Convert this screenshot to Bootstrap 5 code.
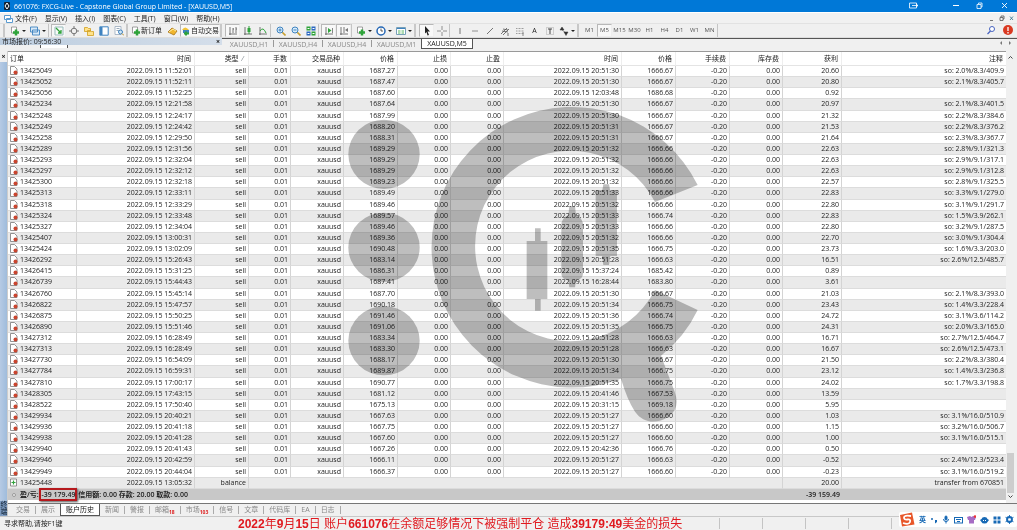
<!DOCTYPE html>
<html lang="zh-CN">
<head>
<meta charset="utf-8">
<meta name="viewport" content="width=device-width, initial-scale=1">
<title>661076: FXCG-Live - Capstone Global Group Limited</title>
<link href="https://cdn.jsdelivr.net/npm/bootstrap@5.3.0/dist/css/bootstrap.min.css" rel="stylesheet">
<style>
body{font-family:"Open Sans","Noto Sans CJK SC",sans-serif;font-size:7px;line-height:11px;background:#f0f0f0;color:#222}
button{font:inherit;color:inherit;background:none;border:0;padding:0}
svg{display:block;flex:none}
.title-bar{background:#0078d7;color:#fff;height:12px}
.menu-strip{height:11px;background:#f1f1f1;border-top:1px solid #fff}
.menu-strip a{color:#222;text-decoration:none}
.menus{gap:8px;margin-left:2px}
.tools{height:15px;padding:0 2px 0 3px;border-bottom:1px solid #ddd;border-top:1px solid #e2e2e2}
.tool{width:15px;height:13px;display:flex;align-items:center;justify-content:center;flex:none}
.tool.drop{width:20px;gap:2px}
.tool.drop::after{content:"";border:2px solid transparent;border-top-color:#222;border-bottom:0}
.tool.on,.auto{background:#f8f8f8;border:1px solid #b8b8b8;border-right-color:#eee;border-bottom-color:#eee}
.rule{width:3px;height:13px;border-left:1px solid #c4c4c4;flex:none}
.grip{width:5px;height:13px;border-left:2px solid #c8c8c8;flex:none}
.frames{font-size:6px;color:#555}
.order{width:34px;height:13px}
.auto{width:40px;height:13px}
.market{width:222px;height:11px;flex:none}
.market-head{height:7px;line-height:7px;background:linear-gradient(90deg,#bccddf,#d4deea);padding:0 2px}
.stub{width:28px;height:3px;margin-left:40px;border:solid #555;border-width:0 1px;background:#fff}
.charts{height:11px;border-top:1px solid #555;padding-left:3px}
.charts button{width:49px;color:#8a8a8a;line-height:9px;border-right:1px solid #999;height:7px;margin-top:1px}
.charts button:nth-child(4){border:0}
.charts button.on{width:52px;height:10px;margin-top:0;background:#fff;color:#222;border:1px solid #555;border-top:0}
.work{min-height:0;margin-top:2px}
.side{width:8px;border-right:1px solid #ccc}
.side-fill{background:linear-gradient(90deg,#b6cae4,#9fbcdc)}
.side-name{writing-mode:vertical-rl;height:15px;line-height:7px;background:#7e9cc2;font-size:7px;color:#123}
.deals{border-top:1px solid #999;background:#fff;border-bottom:3px solid #fff;min-width:0}
.deals table{width:100%;height:100%;table-layout:fixed;border-collapse:separate;border-spacing:0}
.deals td,.deals th{padding:0 2px;text-align:right;white-space:nowrap;border-right:1px solid #d4d4d4;font-weight:400;line-height:10px}
.deals td:last-child,.deals th:last-child{border-right:0}
.deals td:first-child,.deals th:first-child{text-align:left}
.deals thead tr{height:14px}
.deals th{border-right-color:#eee;padding-right:3px;border-bottom:1px solid #e4e4e4}
.deals tbody td{border-bottom:1px solid #dcdcdc}
.deals tbody tr:nth-child(even){background:#eaeaea}
.deals tfoot tr{height:11px;background:#c8c8c8}
.deals tfoot td{border:0;font-weight:600}
.deals td svg{display:inline-block;vertical-align:-2px;margin-right:2px}
.boxed{display:inline-block;border:2px solid #b5191d;box-shadow:1px 1px 2px #555;position:relative;line-height:9px;margin:-1px}
.brand{position:absolute;left:34%;top:51px;width:354px;height:323px;mix-blend-mode:multiply;pointer-events:none}
.scroller{width:8px;background:#f0f0f0;flex:none;padding:3px 0;margin-right:3px}
.thumb{background:#cdcdcd;height:40px;width:7px}
.pages{height:13px;border-top:1px solid #777;padding-left:3px}
.pages button{color:#888;padding:0 5px;height:8px;line-height:8px;border-right:1px solid #aaa;margin-top:2px;white-space:nowrap}
.pages button.on{background:#fff;color:#111;height:12px;border:1px solid #555;border-top:0;margin:0}
.pages button.pre{border:0}
.pages small{color:#d22;font-size:5px;vertical-align:-2px;font-weight:700}
.status{height:14px;border-top:1px solid #c8c8c8}
.status i{width:43px;border-left:1px solid #c4c4c4;height:11px}
.seps{margin-right:83px}
.notice{position:absolute;left:238px;bottom:-1px;font:12px/14px "Liberation Sans","Noto Sans CJK SC",sans-serif;color:#e0191f;white-space:nowrap}
.ime{position:absolute;right:0;bottom:3px;width:118px;height:15px;background:#fff;border-radius:2px;color:#1769b5;padding-right:3px}
</style>
</head>
<body>
<div class="vh-100 d-flex flex-column position-relative">
<header class="title-bar d-flex align-items-center flex-shrink-0">
  <svg class="ms-1 me-1" width="6" height="8" viewBox="0 0 6 8"><rect width="6" height="8" rx="1" fill="#123"/><path d="M3 1 1 4l2 3 2-3z" fill="none" stroke="#fff"/></svg>
  <span>661076: FXCG-Live - Capstone Global Group Limited - [XAUUSD,M5]</span>
  <svg class="ms-auto" width="110" height="12" viewBox="0 0 110 12" fill="none" stroke="#fff"><path d="M2.500 3h7v5h-7zM5 5.500h6M9 4l2 1.500L9 7" stroke-width=".8"/><path d="M46 5.500h6"/><path d="M70 4.500h4v4h-4zM71.500 4V3H75v4h-1" stroke-width=".8"/><path d="m95 3 5 5M100 3l-5 5" stroke-width=".9"/></svg>
</header>
<nav class="menu-strip d-flex align-items-center flex-shrink-0">
  <svg width="9" height="9" viewBox="0 0 9 9" class="ms-1" fill="#fff" stroke="#5b9bd0"><path d="M.5 1.500h6v4h-6zM2.500 4.500h6v4h-6z"/></svg>
  <div class="menus d-flex"><a href="#">文件(F)</a><a href="#">显示(V)</a><a href="#">插入(I)</a><a href="#">图表(C)</a><a href="#">工具(T)</a><a href="#">窗口(W)</a><a href="#">帮助(H)</a></div>
  <svg class="ms-auto" width="30" height="10" viewBox="0 0 30 10" fill="none" stroke="#555" stroke-width=".8"><path d="M3 7.500h3M13 4.500h3v3h-3zM14 4V3h3v3h-1"/><path d="m23 3.500 3 3.500M26 3.500 23 7" stroke="#28708a"/></svg>
</nav>
<div class="tools d-flex align-items-center flex-shrink-0" id="tools"></div>
<div class="d-flex flex-shrink-0">
  <section class="market">
    <div class="market-head d-flex justify-content-between"><span>市场报价: 09:56:30</span><b>×</b></div>
    <div class="stub"></div>
  </section>
  <div class="charts d-flex flex-grow-1">
    <button>XAUUSD,H1</button><button>XAUUSD,H4</button><button>XAUUSD,H4</button><button>XAUUSD,M1</button><button class="on">XAUUSD,M5</button>
    <svg class="ms-auto me-1" width="16" height="9" viewBox="0 0 16 9" fill="#777"><path d="m5 2-2 2 2 2zM12 2l2 2-2 2z"/></svg>
  </div>
</div>
<main class="work d-flex flex-grow-1">
  <aside class="side d-flex flex-column flex-shrink-0"><b class="text-center">×</b><div class="side-fill flex-grow-1"></div><div class="side-name">终端</div></aside>
  <div class="flex-grow-1 d-flex flex-column">
    <div class="work d-flex flex-grow-1 mt-0">
      <div class="deals position-relative flex-grow-1">
        <table>
          <colgroup id="cols"></colgroup>
          <thead><tr><th>订单</th><th>时间</th><th>类型 &nbsp;<span class="text-secondary">⁄</span>&nbsp;</th><th>手数</th><th>交易品种</th><th>价格</th><th>止损</th><th>止盈</th><th>时间</th><th>价格</th><th>手续费</th><th>库存费</th><th>获利</th><th>注释</th></tr></thead>
          <tbody id="rows"></tbody>
          <tfoot><tr><td colspan="8"><svg width="8" height="8" viewBox="0 0 8 8"><circle cx="4" cy="4" r="1.500" fill="#eee" stroke="#999"/></svg>盈/亏: <span class="boxed">-39 179.49</span> 信用额: 0.00 存款: 20.00 取款: 0.00</td><td colspan="5">-39 159.49</td><td></td></tr></tfoot>
        </table>
        <svg class="brand" viewBox="21 39 1062 969" fill="#bebebe"><ellipse cx="132" cy="193" rx="107" ry="104"/><ellipse cx="132" cy="472" rx="107" ry="104"/><ellipse cx="132" cy="752" rx="107" ry="104"/>
          <path d="M1073 285A421 421 0 1 0 843 866Q862 930 885 965C910 1000 950 1003 985 980Q1022 955 1004 905L963 797Q1035 740 1073 660L945 600A286 286 0 1 1 945 336Z"/>
          <path d="M585 415h17v38h20v174h-20v35h-17v-35h-25V453h25zM688 348h17l3 27q21 10 21 30v145q0 18-21 22l-3 20h-17l-3-20q-21-4-21-22V405q0-20 21-30zM790 283h17l3 17h21v198h-20l-4 27h-17l-4-27h-19V300h20z"/></svg>
      </div>
      <div class="scroller d-flex flex-column align-items-center">
        <svg width="7" height="7" viewBox="0 0 7 7" fill="none" stroke="#444"><path d="m1.500 4.500 2-2 2 2"/></svg><div class="thumb mt-auto"></div><svg width="7" height="7" viewBox="0 0 7 7" fill="none" stroke="#444"><path d="m1.500 2.500 2 2 2-2"/></svg>
      </div>
    </div>
    <div class="pages d-flex flex-shrink-0"><button>交易</button><button class="pre">展示</button><button class="on">账户历史</button><button>新闻</button><button>警报</button><button>邮箱<small>18</small></button><button>市场<small>103</small></button><button>信号</button><button>文章</button><button>代码库</button><button>EA</button><button>日志</button></div>
  </div>
</main>
<footer class="status d-flex align-items-center flex-shrink-0 position-relative">
  <span class="ms-1">寻求帮助,请按F1键</span>
  <div class="notice"><b>2022</b>年<b>9</b>月<b>15</b>日 账户<b>661076</b>在余额足够情况下被强制平仓 造成<b>39179:49</b>美金的损失</div>
  <div class="seps ms-auto d-flex"><i></i><i></i><i></i><i></i><i></i></div>
  <div class="ime d-flex align-items-center justify-content-between">
    <svg width="16" height="15" viewBox="0 0 16 15"><path d="m1 3 12-2.500 2.500 12L3 14.500z" fill="#e8572a"/><path d="M12 4Q5 3 5 5.500T8.500 7.500 11 10 4 11" fill="none" stroke="#fff" stroke-width="1.800"/></svg>
    <b>英</b>
    <svg width="8" height="8" viewBox="0 0 8 8" fill="#1769b5"><circle cx="2" cy="3" r="1"/><path d="M5 4h2v2L5 7.500z"/></svg>
    <svg width="8" height="9" viewBox="0 0 8 9" fill="none" stroke="#1769b5"><rect x="3" y="1" width="2" height="4" rx="1" fill="#1769b5"/><path d="M1.500 4Q1.500 6.500 4 6.500T6.500 4M4 6v2.500"/></svg>
    <svg width="9" height="8" viewBox="0 0 9 8" fill="none" stroke="#1769b5"><rect x=".5" y="1.500" width="8" height="5.500"/><path d="M2 3.500h5M3 5.500h3"/></svg>
    <svg width="9" height="9" viewBox="0 0 9 9"><path d="m0 2 3-1 1.500 1L6 1l3 1-1 3H7v3.500H2V5H1z" fill="#a66cc4"/><circle cx="8" cy="1.500" r="1.300" fill="#e33"/></svg>
    <svg width="9" height="8" viewBox="0 0 9 8"><path d="M4.500 1Q7 1 7.500 3L9 4 7.500 6Q7 7.500 4.500 7.500T1.500 6L0 4l1.500-1Q2 1 4.500 1z" fill="#1769b5"/><path d="M3 4.500h1M5 4.500h1" stroke="#fff"/></svg>
    <svg width="8" height="8" viewBox="0 0 8 8" fill="#1769b5"><path d="M.5.500h3v3h-3zM4.500.500h3v3h-3zM.5 4.500h3v3h-3zM4.500 4.500h3v3h-3z"/></svg>
    <svg width="9" height="9" viewBox="0 0 9 9"><circle cx="4.500" cy="4.500" r="2.500" fill="none" stroke="#1769b5" stroke-width="1.800"/><path d="M4.500 0v9M.5 2.300l8 4.500M8.500 2.300l-8 4.500" stroke="#1769b5" stroke-width=".9"/><circle cx="4.500" cy="4.500" r="1.300" fill="#fff"/></svg>
  </div>
</footer>
</div>
<script>
// Toolbar glyphs, each drawn on a 10x10 grid
const G='#2fa33a',B='#3f83c0',K='#555';
const ic={
 add:`<path d="M1.500 1h5v6h-5z" fill="#fff" stroke="#888" stroke-width=".8"/><path d="M6 3.500v6M3 6.500h6" stroke="${G}" stroke-width="2.500"/>`,
 wins:`<path d="M.5 1h7v5h-7zM2.500 4h7v5h-7z" fill="#d9eaf8" stroke="${B}" stroke-width=".9"/>`,
 nav:`<path d="M1 1h8v8H1z" fill="#f7faf7" stroke="#9bb"/><path d="m2 2 5 5M7 4v3H4" stroke="${G}" stroke-width="1.300" fill="none"/>`,
 aim:`<circle cx="5" cy="5" r="2.800" fill="none" stroke="#777"/><path d="M5 0v3M5 7v3M0 5h3M7 5h3" stroke="#777"/>`,
 fold:`<path d="M.5 1.500h3l1 1h2v3h-6zM3.500 4.500h3l1 1h2v4h-6z" fill="#ffe28a" stroke="#d0a020" stroke-width=".8"/>`,
 win:`<path d="M.8.800h8.400v8.400H.800z" fill="#fff" stroke="${B}"/><path d="M1 1h2.500v8H1z" fill="${B}"/>`,
 find:`<path d="M1 .5h6v8H1z" fill="#fff" stroke="#9ab" stroke-width=".8"/><path d="M2.500 2.500h3M2.500 4.500h3" stroke="#9ab"/><circle cx="6.500" cy="6" r="2" fill="#cfe6f5" stroke="${B}"/><path d="m8 7.500 2 2" stroke="#b98b20"/>`,
 gold:`<path d="m0 6 4-4 5 3-3 4z" fill="#f1b62d" stroke="#a87414" stroke-width=".8"/><path d="m1 6 4-3 3 2" fill="none" stroke="#fff0a5"/>`,
 bot:`<path d="M1 4q3-5 7 0z" fill="#f0c33a"/><path d="M2 4h6v3H2z" fill="${B}"/><path d="M5 5.500v4M3 7.500h5" stroke="${G}" stroke-width="2"/>`,
 bars:`<path d="M2 1v8M1 8h8M5 2v5M5 3h1M8 1v6M8 3h1" stroke="${K}" stroke-width=".8"/>`,
 cand:`<path d="M2 1v8M1 8h8" stroke="${K}" stroke-width=".8"/><path d="M6 0v8" stroke="${G}"/><path d="M4.500 2h3v4h-3z" fill="${G}"/>`,
 line:`<path d="M2 1v8M1 8h8" stroke="${K}" stroke-width=".8"/><path d="M2 5q3-5 6 2" fill="none" stroke="${G}"/>`,
 zin:`<path d="m6 6 3.500 3.500" stroke="#c8a030" stroke-width="1.600"/><circle cx="4" cy="4" r="3" fill="#d8ecfa" stroke="${B}"/><path d="M4 2.500v3M2.500 4h3" stroke="${B}"/>`,
 zout:`<path d="m6 6 3.500 3.500" stroke="#c8a030" stroke-width="1.600"/><circle cx="4" cy="4" r="3" fill="#d8ecfa" stroke="${B}"/><path d="M2.500 4h3" stroke="${B}"/>`,
 tile:`<path d="M.5.500h4v4h-4zM5.500 5.500h4v4h-4z" fill="${G}"/><path d="M5.500.500h4v4h-4zM.5 5.500h4v4h-4z" fill="#2b68c0"/><path d="M1.500 2.500h2M6.500 2.500h2M1.500 7.500h2M6.500 7.500h2" stroke="#fff"/>`,
 scr:`<path d="M2 1v8M1 8h8" stroke="${K}" stroke-width=".8"/><path d="M4 2v5l3.500-2.500z" fill="${G}"/><path d="M8.500 2v5" stroke="${K}" stroke-width=".7"/>`,
 shf:`<path d="M2 1v8M1 8h8M5 1v6" stroke="${K}" stroke-width=".8"/><path d="M9 2v4L6 4z" fill="#777"/>`,
 clk:`<circle cx="5" cy="5" r="4" fill="#fff" stroke="#2567b5" stroke-width="1.500"/><path d="M5 2.500V5h2" fill="none" stroke="#333" stroke-width=".8"/>`,
 tmpl:`<path d="M.5 1.500h9v7h-9z" fill="#fff" stroke="#78a0b8"/><path d="M1 2.500h8" stroke="${B}"/><path d="M2 5h2.500M5.500 5H8M2 7h2.500M5.500 7H8" stroke="${G}" stroke-width=".8"/>`,
 cur:`<path d="m3 0 5 5.500H5.500L7 9 5.500 9.500 4.500 6 3 7.500z" fill="#222"/>`,
 cross:`<path d="M5 0v4M5 6v4M0 5h4M6 5h4" stroke="#777" stroke-width=".8"/>`,
 vl:`<path d="M5 2v6" stroke="#555" stroke-width=".8"/>`,hl:`<path d="M2 5h6" stroke="#777" stroke-width=".8"/>`,tr:`<path d="m2 8 6-6" stroke="#666" stroke-width=".9"/>`,
 ch:`<path d="m1 8 6-6M3 9l6-6M2 5l6 1M3 3l5 1M8 7v3" stroke="#555" stroke-width=".8"/>`,
 fib:`<path d="M1 2.500h8M1 5h8M1 7.500h8" stroke="#888" stroke-width=".8" stroke-dasharray="1 .5"/><path d="M8 6v4" stroke="#888"/>`,
 lab:`<path d="M1.500 1.500h7v7h-7z" fill="none" stroke="#999" stroke-width=".8" stroke-dasharray="1 1"/><path d="M3 3h4M5 3v5" stroke="#444"/>`,
 arr:`<path d="m1 4 2-3 2 3zM5 6h4L7 9.500zM3 4l4 3" fill="#333" stroke="#333" stroke-width=".5"/>`};
const svg=n=>`<svg width="10" height="10" viewBox="0 0 10 10">${ic[n]}</svg>`;
const plan='| add> wins> / nav* aim fold win find | ORDER gold AUTO | bars* cand line / zin zout tile / scr* shf* / add> clk> tmpl> | cur* cross / vl hl tr ch fib TEXT lab arr> | M1 M5* M15 M30 H1 H4 D1 W1 MN /';
document.getElementById('tools').innerHTML=plan.split(' ').map(t=>{
 if(t==='|')return '<span class="grip"></span>';
 if(t==='/')return '<span class="rule"></span>';
 if(t==='ORDER')return `<button class="order d-flex align-items-center">${svg('add')}<span class="text-nowrap">新订单</span></button>`;
 if(t==='AUTO')return `<button class="auto d-flex align-items-center">${svg('bot')}<span class="text-nowrap">自动交易</span></button>`;
 if(t==='TEXT')return '<button class="tool">A</button>';
 const n=t.replace(/[*>]/,''),c=t.endsWith('*')?' on':t.endsWith('>')?' drop':'';
 return ic[n]?`<button class="tool${c}" aria-label="${n}">${svg(n)}</button>`:`<button class="tool frames${c}">${n}</button>`;
}).join('')+`<svg class="ms-auto" width="32" height="13" viewBox="0 0 32 13"><circle cx="9" cy="5" r="2.500" fill="#fff" stroke="#4763c0"/><path d="M7.500 7 4.500 10" stroke="#4763c0" stroke-width="1.200"/><circle cx="25" cy="6" r="5" fill="#d93a22"/><path d="M25 3v4M25 8v1.500" stroke="#fff" stroke-width="1.300"/></svg>`;

document.getElementById('cols').innerHTML=[69,118,54,42,53,54,53,53,118,54,54,53,59].map(w=>`<col style="width:${w}px">`).join('')+'<col>';

// order, open time, open price, close time, close price, profit, comment
const deals=`13425049|11:52:01|1687.27|20:51:30|1666.67|20.60|2.0%/8.3/409.9
13425052|11:52:11|1687.47|20:51:30|1666.67|20.80|2.1%/8.3/405.7
13425056|11:52:25|1687.60|12:03:48|1686.68|0.92|
13425234|12:21:58|1687.64|20:51:30|1666.67|20.97|2.1%/8.3/401.5
13425248|12:24:17|1687.99|20:51:30|1666.67|21.32|2.2%/8.3/384.6
13425249|12:24:42|1688.20|20:51:31|1666.67|21.53|2.2%/8.3/376.2
13425258|12:29:50|1688.31|20:51:31|1666.67|21.64|2.3%/8.3/367.7
13425289|12:31:56|1689.29|20:51:32|1666.66|22.63|2.8%/9.1/321.3
13425293|12:32:04|1689.29|20:51:32|1666.66|22.63|2.9%/9.1/317.1
13425297|12:32:12|1689.29|20:51:32|1666.66|22.63|2.9%/9.1/312.8
13425300|12:32:18|1689.23|20:51:32|1666.66|22.57|2.8%/9.1/325.5
13425313|12:33:11|1689.49|20:51:33|1666.66|22.83|3.3%/9.1/279.0
13425318|12:33:29|1689.46|20:51:32|1666.66|22.80|3.1%/9.1/291.7
13425324|12:33:48|1689.57|20:51:33|1666.74|22.83|1.5%/3.9/262.1
13425327|12:34:04|1689.46|20:51:33|1666.66|22.80|3.2%/9.1/287.5
13425407|13:00:31|1689.36|20:51:32|1666.66|22.70|3.0%/9.1/304.4
13425424|13:02:09|1690.48|20:51:35|1666.75|23.73|1.6%/3.3/203.0
13426292|15:26:43|1683.14|20:51:28|1666.63|16.51|2.6%/12.5/485.7
13426415|15:31:25|1686.31|15:37:24|1685.42|0.89|
13426739|15:44:43|1687.41|16:28:44|1683.80|3.61|
13426760|15:45:14|1687.70|20:51:30|1666.67|21.03|2.1%/8.3/393.0
13426822|15:47:57|1690.18|20:51:34|1666.75|23.43|1.4%/3.3/228.4
13426875|15:50:25|1691.46|20:51:36|1666.74|24.72|3.1%/3.6/114.2
13426890|15:51:46|1691.06|20:51:35|1666.75|24.31|2.0%/3.3/165.0
13427312|16:28:49|1683.34|20:51:28|1666.63|16.71|2.7%/12.5/464.7
13427313|16:28:49|1683.30|20:51:28|1666.63|16.67|2.6%/12.5/473.1
13427730|16:54:09|1688.17|20:51:30|1666.67|21.50|2.2%/8.3/380.4
13427784|16:59:31|1689.87|20:51:34|1666.75|23.12|1.4%/3.3/236.8
13427810|17:00:17|1690.77|20:51:35|1666.75|24.02|1.7%/3.3/198.8
13428305|17:43:15|1681.12|20:41:46|1667.53|13.59|
13428522|17:50:40|1675.13|20:31:15|1669.18|5.95|
13429934|20:40:21|1667.63|20:51:27|1666.60|1.03|3.1%/16.0/510.9
13429936|20:41:18|1667.75|20:51:27|1666.60|1.15|3.2%/16.0/506.7
13429938|20:41:28|1667.60|20:51:27|1666.60|1.00|3.1%/16.0/515.1
13429940|20:41:43|1667.26|20:42:36|1666.76|0.50|
13429946|20:42:59|1666.11|20:51:27|1666.63|-0.52|2.4%/12.3/523.4
13429949|20:44:04|1666.37|20:51:27|1666.60|-0.23|3.1%/16.0/519.2`;
const page=`<svg width="8" height="9" viewBox="0 0 8 9"><path d="M.5.500h4L7 3v5.500H.500z" fill="#fff" stroke="#777" stroke-width=".8"/><circle cx="5.500" cy="6.500" r="2" fill="#c9452f"/></svg>`;
const plus=`<svg width="8" height="9" viewBox="0 0 8 9"><path d="M.5 1h6v7h-6z" fill="#fff" stroke="#777" stroke-width=".8"/><path d="M3.500 2.500v4M1.500 4.500h4" stroke="#2fa33a" stroke-width="1.200"/></svg>`;
const td=a=>'<tr>'+a.map(v=>`<td>${v}</td>`).join('')+'</tr>';
document.getElementById('rows').innerHTML=deals.split('\n').map(l=>{
 const [id,t1,p1,t2,p2,pr,c]=l.split('|');
 return td([page+id,'2022.09.15 '+t1,'sell','0.01','xauusd',p1,'0.00','0.00','2022.09.15 '+t2,p2,'-0.20','0.00',pr,c?'so: '+c:'']);
}).join('')+`<tr><td>${plus}13425448</td><td>2022.09.15 13:05:32</td><td>balance</td><td colspan="9"></td><td>20.00</td><td>transfer from 670851</td></tr>`;
</script>
<script src="https://cdn.jsdelivr.net/npm/bootstrap@5.3.0/dist/js/bootstrap.bundle.min.js"></script>
</body>
</html>
